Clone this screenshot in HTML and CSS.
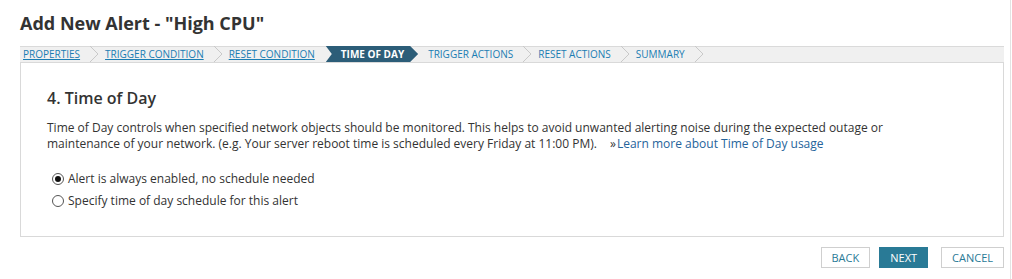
FILE: index.html
```html
<!DOCTYPE html>
<html lang="en">
<head>
<meta charset="utf-8">
<title>Add New Alert</title>
<link rel="stylesheet" href="styles.css">
</head>
<body>
<div class="page">
  <h1 class="title">Add New Alert - "High CPU"</h1>
  <nav class="steps">
    <a class="step done" href="#">PROPERTIES</a>
    <svg class="sep" width="25" height="16" viewBox="0 0 25 16"><polyline points="10,0 18,8 10,16" fill="none" stroke="#c9c9c9" stroke-width="1"/></svg>
    <a class="step done" href="#">TRIGGER CONDITION</a>
    <svg class="sep" width="25" height="16" viewBox="0 0 25 16"><polyline points="10,0 18,8 10,16" fill="none" stroke="#c9c9c9" stroke-width="1"/></svg>
    <a class="step done" href="#">RESET CONDITION</a>
    <span class="step active">TIME OF DAY</span>
    <span class="step todo">TRIGGER ACTIONS</span>
    <svg class="sep" width="25" height="16" viewBox="0 0 25 16"><polyline points="10,0 18,8 10,16" fill="none" stroke="#c9c9c9" stroke-width="1"/></svg>
    <span class="step todo">RESET ACTIONS</span>
    <svg class="sep" width="25" height="16" viewBox="0 0 25 16"><polyline points="10,0 18,8 10,16" fill="none" stroke="#c9c9c9" stroke-width="1"/></svg>
    <span class="step todo">SUMMARY</span>
    <svg class="sep" width="25" height="16" viewBox="0 0 25 16"><polyline points="10,0 18,8 10,16" fill="none" stroke="#c9c9c9" stroke-width="1"/></svg>
  </nav>
  <section class="panel">
    <h2 class="heading">4. Time of Day</h2>
    <p class="desc">Time of Day controls when specified network objects should be monitored. This helps to avoid unwanted alerting noise during the expected outage or maintenance of your network. (e.g. Your server reboot time is scheduled every Friday at 11:00 PM). <a class="more" href="#">Learn more about Time of Day usage</a></p>
    <label class="option"><input type="radio" name="tod" checked><span>Alert is always enabled, no schedule needed</span></label>
    <label class="option"><input type="radio" name="tod"><span>Specify time of day schedule for this alert</span></label>
  </section>
  <div class="actions">
    <button class="btn">BACK</button>
    <button class="btn primary">NEXT</button>
    <button class="btn cancel">CANCEL</button>
  </div>
</div>
</body>
</html>
```
FILE: styles.css
```css
html, body {
  margin: 0;
  padding: 0;
  background: #ffffff;
}
body {
  font-family: "Open Sans", "Liberation Sans", sans-serif;
  color: #333333;
}
.page {
  width: 984px;
  height: 279px;
  padding: 0 6px 0 20px;
  border-right: 1px solid #e3e3e3;
  box-sizing: content-box;
}
.title {
  margin: 0;
  padding-top: 9px;
  font-size: 18px;
  line-height: 28px;
  font-weight: 700;
  color: #333333;
}
.steps {
  margin-top: 9px;
  height: 16px;
  background: #f0f0f0;
  box-shadow: inset 0 1px 0 #dadada;
  display: flex;
  align-items: center;
  font-size: 10px;
  line-height: 16px;
}
.step {
  display: block;
  white-space: nowrap;
  color: #1a7db3;
}
.step.done:first-child {
  margin-left: 3px;
}
a.step {
  text-decoration: underline;
}
.sep {
  display: block;
  flex: none;
}
.step.active {
  margin-left: 11px;
  margin-right: 10px;
  height: 16px;
  padding: 0 14px 0 15px;
  background: #2c5d78;
  color: #ffffff;
  font-weight: 700;
  clip-path: polygon(0 0, calc(100% - 8px) 0, 100% 50%, calc(100% - 8px) 100%, 0 100%, 6px 50%);
}
.panel {
  border: 1px solid #d9d9d9;
  padding: 24px 26px 24px 26px;
}
.heading {
  margin: 0;
  font-size: 16px;
  line-height: 22px;
  font-weight: 600;
  color: #333333;
}
.desc {
  max-width: 880px;
  margin: 11px 0 16px 0;
  font-size: 12px;
  line-height: 16px;
  color: #333333;
}
.more {
  margin-left: 10px;
  color: #25649b;
  text-decoration: none;
}
.more::before {
  content: "»";
  color: #333333;
  margin-right: 1px;
}
.option {
  display: flex;
  align-items: center;
  height: 22px;
  font-size: 12px;
  line-height: 22px;
  color: #333333;
}
.option input {
  appearance: none;
  -webkit-appearance: none;
  margin: 0 4px 0 5px;
  width: 12px;
  height: 12px;
  border: 1px solid #555555;
  border-radius: 50%;
  background: #ffffff;
  box-sizing: border-box;
  display: grid;
  place-items: center;
}
.option input:checked::after {
  content: "";
  width: 6px;
  height: 6px;
  border-radius: 50%;
  background: #111111;
}
.actions {
  margin-top: 10px;
  display: flex;
  justify-content: flex-end;
  gap: 9px;
}
.btn {
  height: 21px;
  padding: 0 10px;
  border: 1px solid #cfcfcf;
  background: #ffffff;
  color: #297a96;
  font-family: "Open Sans", "Liberation Sans", sans-serif;
  font-size: 11px;
  line-height: 19px;
}
.btn.primary {
  background: #297a96;
  border-color: #297a96;
  color: #ffffff;
}
.btn.cancel {
  margin-left: 4px;
}
```
